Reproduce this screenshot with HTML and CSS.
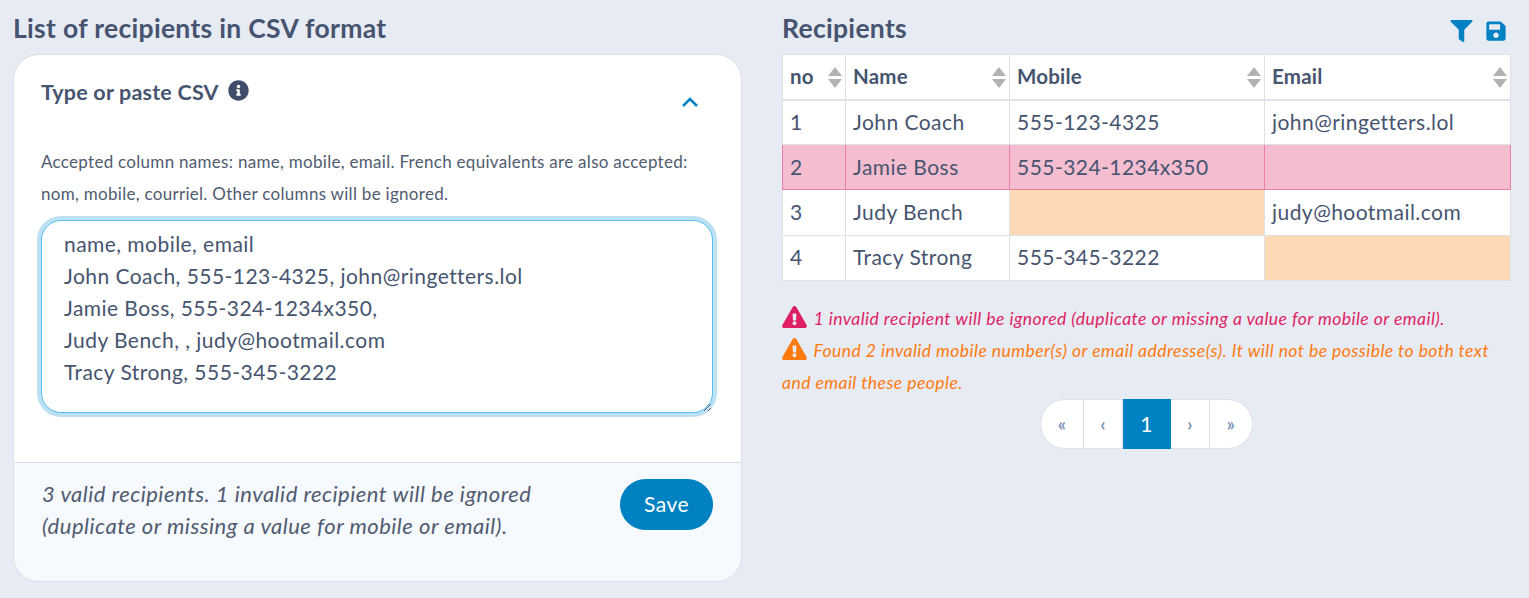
FILE: index.html
```html
<!DOCTYPE html>
<html lang="en">
<head>
<meta charset="utf-8">
<title>Recipients</title>
<link rel="stylesheet" href="styles.css">
</head>
<body>
<main class="page">
  <section class="col">
    <h2 class="title">List of recipients in CSV format</h2>
    <div class="card">
      <div class="card-body">
        <div class="card-head">
          <h3 class="card-title">Type or paste CSV
            <svg class="info" viewBox="0 0 512 512"><path d="M256 8C119.043 8 8 119.083 8 256c0 136.997 111.043 248 248 248s248-111.003 248-248C504 119.083 392.957 8 256 8zm0 110c23.196 0 42 18.804 42 42s-18.804 42-42 42-42-18.804-42-42 18.804-42 42-42zm56 254c0 6.627-5.373 12-12 12h-88c-6.627 0-12-5.373-12-12v-24c0-6.627 5.373-12 12-12h12v-64h-12c-6.627 0-12-5.373-12-12v-24c0-6.627 5.373-12 12-12h64c6.627 0 12 5.373 12 12v100h12c6.627 0 12 5.373 12 12v24z"/></svg>
          </h3>
          <svg class="chevron" viewBox="0 0 18 12"><path d="M2 10l7-7 7 7"/></svg>
        </div>
        <p class="hint">Accepted column names: name, mobile, email. French equivalents are also accepted: nom, mobile, courriel. Other columns will be ignored.</p>
        <textarea class="csv" spellcheck="false">name, mobile, email
John Coach, 555-123-4325, john@ringetters.lol
Jamie Boss, 555-324-1234x350,
Judy Bench, , judy@hootmail.com
Tracy Strong, 555-345-3222</textarea>
      </div>
      <div class="card-foot">
        <p class="summary">3 valid recipients. 1 invalid recipient will be ignored (duplicate or missing a value for mobile or email).</p>
        <button class="save" type="button">Save</button>
      </div>
    </div>
  </section>
  <section class="col">
    <div class="head-row">
      <h2 class="title">Recipients</h2>
      <div class="tools">
        <svg class="tool-filter" viewBox="0 0 512 512"><path d="M487.976 0H24.028C2.71 0-8.047 25.866 7.058 40.971L192 225.941V432c0 7.831 3.821 15.17 10.237 19.662l80 55.98C298.02 518.69 320 507.493 320 487.98V225.941l184.947-184.97C520.021 25.896 509.338 0 487.976 0z"/></svg>
        <svg class="tool-save" viewBox="0 0 448 512"><path d="M433.941 129.941l-83.882-83.882A48 48 0 0 0 316.118 32H48C21.49 32 0 53.49 0 80v352c0 26.51 21.49 48 48 48h352c26.51 0 48-21.49 48-48V163.882a48 48 0 0 0-14.059-33.941zM224 416c-35.346 0-64-28.654-64-64 0-35.346 28.654-64 64-64s64 28.654 64 64c0 35.346-28.654 64-64 64zm96-304.52V212c0 6.627-5.373 12-12 12H76c-6.627 0-12-5.373-12-12V108c0-6.627 5.373-12 12-12h228.52c3.183 0 6.235 1.264 8.485 3.515l3.48 3.48A11.996 11.996 0 0 1 320 111.48z"/></svg>
      </div>
    </div>
    <table class="grid">
      <colgroup><col class="c-no"><col class="c-name"><col class="c-mobile"><col class="c-email"></colgroup>
      <thead>
        <tr>
          <th>no<span class="sort"></span></th>
          <th>Name<span class="sort"></span></th>
          <th>Mobile<span class="sort"></span></th>
          <th>Email<span class="sort"></span></th>
        </tr>
      </thead>
      <tbody>
        <tr><td>1</td><td>John Coach</td><td>555-123-4325</td><td>john@ringetters.lol</td></tr>
        <tr class="row-bad"><td>2</td><td>Jamie Boss</td><td>555-324-1234x350</td><td></td></tr>
        <tr><td>3</td><td>Judy Bench</td><td class="cell-warn"></td><td>judy@hootmail.com</td></tr>
        <tr><td>4</td><td>Tracy Strong</td><td>555-345-3222</td><td class="cell-warn"></td></tr>
      </tbody>
    </table>
    <div class="notes">
      <p class="note note-danger"><svg class="warn" viewBox="0 0 576 512"><path d="M569.517 440.013C587.975 472.007 564.806 512 527.94 512H48.054c-36.937 0-59.999-40.055-41.577-71.987L246.423 23.985c18.467-32.009 64.72-31.951 83.154 0l239.94 416.028zM288 354c-25.405 0-46 20.595-46 46s20.595 46 46 46 46-20.595 46-46-20.595-46-46-46zm-43.673-165.346l7.418 136c.347 6.364 5.609 11.346 11.982 11.346h48.546c6.373 0 11.635-4.982 11.982-11.346l7.418-136c.375-6.874-5.098-12.654-11.982-12.654h-63.383c-6.884 0-12.356 5.78-11.981 12.654z"/></svg> 1 invalid recipient will be ignored (duplicate or missing a value for mobile or email).</p>
      <p class="note note-warning"><svg class="warn" viewBox="0 0 576 512"><path d="M569.517 440.013C587.975 472.007 564.806 512 527.94 512H48.054c-36.937 0-59.999-40.055-41.577-71.987L246.423 23.985c18.467-32.009 64.72-31.951 83.154 0l239.94 416.028zM288 354c-25.405 0-46 20.595-46 46s20.595 46 46 46 46-20.595 46-46-20.595-46-46-46zm-43.673-165.346l7.418 136c.347 6.364 5.609 11.346 11.982 11.346h48.546c6.373 0 11.635-4.982 11.982-11.346l7.418-136c.375-6.874-5.098-12.654-11.982-12.654h-63.383c-6.884 0-12.356 5.78-11.981 12.654z"/></svg> Found 2 invalid mobile number(s) or email addresse(s). It will not be possible to both text and email these people.</p>
    </div>
    <nav class="pager">
      <a class="page-link page-first">«</a>
      <a class="page-link page-prev">‹</a>
      <a class="page-link page-active">1</a>
      <a class="page-link page-next">›</a>
      <a class="page-link page-last">»</a>
    </nav>
  </section>
</main>
</body>
</html>
```
FILE: styles.css
```css
* { box-sizing: border-box; }
html, body { margin: 0; height: 100%; }
body {
  background: #e7ebf4;
  color: #46546f;
  font-family: "Lato", "Noto Sans", sans-serif;
  font-size: 21px;
  line-height: 32px;
  letter-spacing: .45px;
  overflow: hidden;
}
.page {
  display: grid;
  grid-template-columns: 729px 729px;
  gap: 40px;
  padding: 12px 0 0 13px;
}
.col { min-width: 0; }
.title {
  margin: 0 0 10px;
  font-size: 26.5px;
  line-height: 32px;
  font-weight: 700;
  letter-spacing: .3px;
}
.card {
  background: #fff;
  border: 1px solid #dcdfe5;
  border-radius: 26px;
  height: 528px;
  display: flex;
  flex-direction: column;
  overflow: hidden;
}
.card-body { padding: 21px 28px 0 27px; height: 407px; flex: none; }
.card-head { display: flex; justify-content: space-between; align-items: flex-start; height: 70px; }
.card-title { margin: 0; font-size: 21.5px; line-height: 32px; font-weight: 700; letter-spacing: .2px; display: flex; align-items: center; gap: 9px; }
.info { width: 21px; height: 21px; fill: #3f4d6b; margin-top: -3px; }
.chevron { width: 18px; height: 12px; fill: none; stroke: #0081c2; stroke-width: 2.6; margin: 20px 14px 0 0; }
.hint { margin: 0 0 10px; font-size: 17px; line-height: 32px; letter-spacing: .29px; color: #505b70; }
.csv {
  display: block;
  width: 100%;
  height: 193px;
  padding: 7px 22px;
  font: inherit;
  letter-spacing: inherit;
  color: #46546f;
  background: #fff;
  border: 1px solid #4dbff3;
  border-radius: 20px;
  box-shadow: 0 0 0 4px #bde0f3;
  outline: 0;
  resize: vertical;
  overflow: hidden;
}
.card-foot {
  flex: 1;
  background: #f6f9fd;
  border-top: 1px solid #d9dce2;
  padding: 16px 28px 0 28px;
  display: flex;
  justify-content: space-between;
  align-items: flex-start;
}
.summary { margin: -1px 0 0; width: 500px; font-style: italic; font-size: 22px; line-height: 32px; letter-spacing: .5px; color: #505b70; }
.save {
  width: 93px;
  height: 51px;
  background: #0081c2;
  color: #fff;
  border: 0;
  border-radius: 26px;
  font: inherit;
  letter-spacing: inherit;
  padding: 0 0 2px;
}
.head-row { display: flex; justify-content: space-between; align-items: flex-start; }
.tools { display: flex; align-items: center; gap: 13px; padding: 8px 5px 0 0; }
.tool-filter { width: 23px; height: 22px; fill: #0081c2; }
.tool-save { width: 20px; height: 22px; fill: #0081c2; }
.grid {
  width: 728px;
  table-layout: fixed;
  border-collapse: collapse;
  background: #fff;
}
.c-no { width: 63px; }
.c-name { width: 164px; }
.c-mobile { width: 255px; }
.c-email { width: 246px; }
.grid th, .grid td { border: 1px solid #dee2e6; padding: 5px 7px 6px; text-align: left; vertical-align: middle; }
.grid th { position: relative; height: 45px; padding: 4px 7px 6px; font-size: 20.5px; font-weight: 700; letter-spacing: .2px; border-bottom-width: 2px; }
.grid td { height: 45.2px; }
.sort { position: absolute; right: 3px; top: 12px; width: 14px; height: 21px; }
.sort::before, .sort::after {
  content: "";
  position: absolute;
  left: 0;
  border-left: 7px solid transparent;
  border-right: 7px solid transparent;
}
.sort::before { top: 0; border-bottom: 9px solid #b2b2b2; }
.sort::after { bottom: 0; border-top: 9px solid #b2b2b2; }
.row-bad td { background: #f4bdd0; border-color: #dee2e6 #ef7ea6 #ef7ea6; }
.cell-warn { background: #fdd9b5; }
.notes { margin-top: 22px; }
.note { margin: 0; font-size: 17.5px; line-height: 32px; letter-spacing: .46px; font-style: italic; }
.note-danger { color: #df1f63; }
.note-warning { color: #ff7a0f; }
.warn { width: 25px; height: 22px; vertical-align: -3px; fill: currentColor; margin-right: 2px; }
.pager { display: flex; justify-content: flex-start; padding-left: 258px; margin-top: 0; }
.page-link {
  height: 50px;
  background: #fff;
  border: 1px solid #dee2e6;
  border-left: 0;
  display: flex;
  align-items: center;
  justify-content: center;
  color: #7d95bb;
  font-size: 18px;
  font-weight: 700;
}
.page-first { width: 44px; border-left: 1px solid #dee2e6; border-radius: 25px 0 0 25px; }
.page-prev { width: 39px; }
.page-next { width: 39px; }
.page-last { width: 43px; border-radius: 0 25px 25px 0; }
.page-active { width: 48px; background: #0081c2; border-color: #0081c2; color: #fff; font-size: 21px; font-weight: 400; }
```
